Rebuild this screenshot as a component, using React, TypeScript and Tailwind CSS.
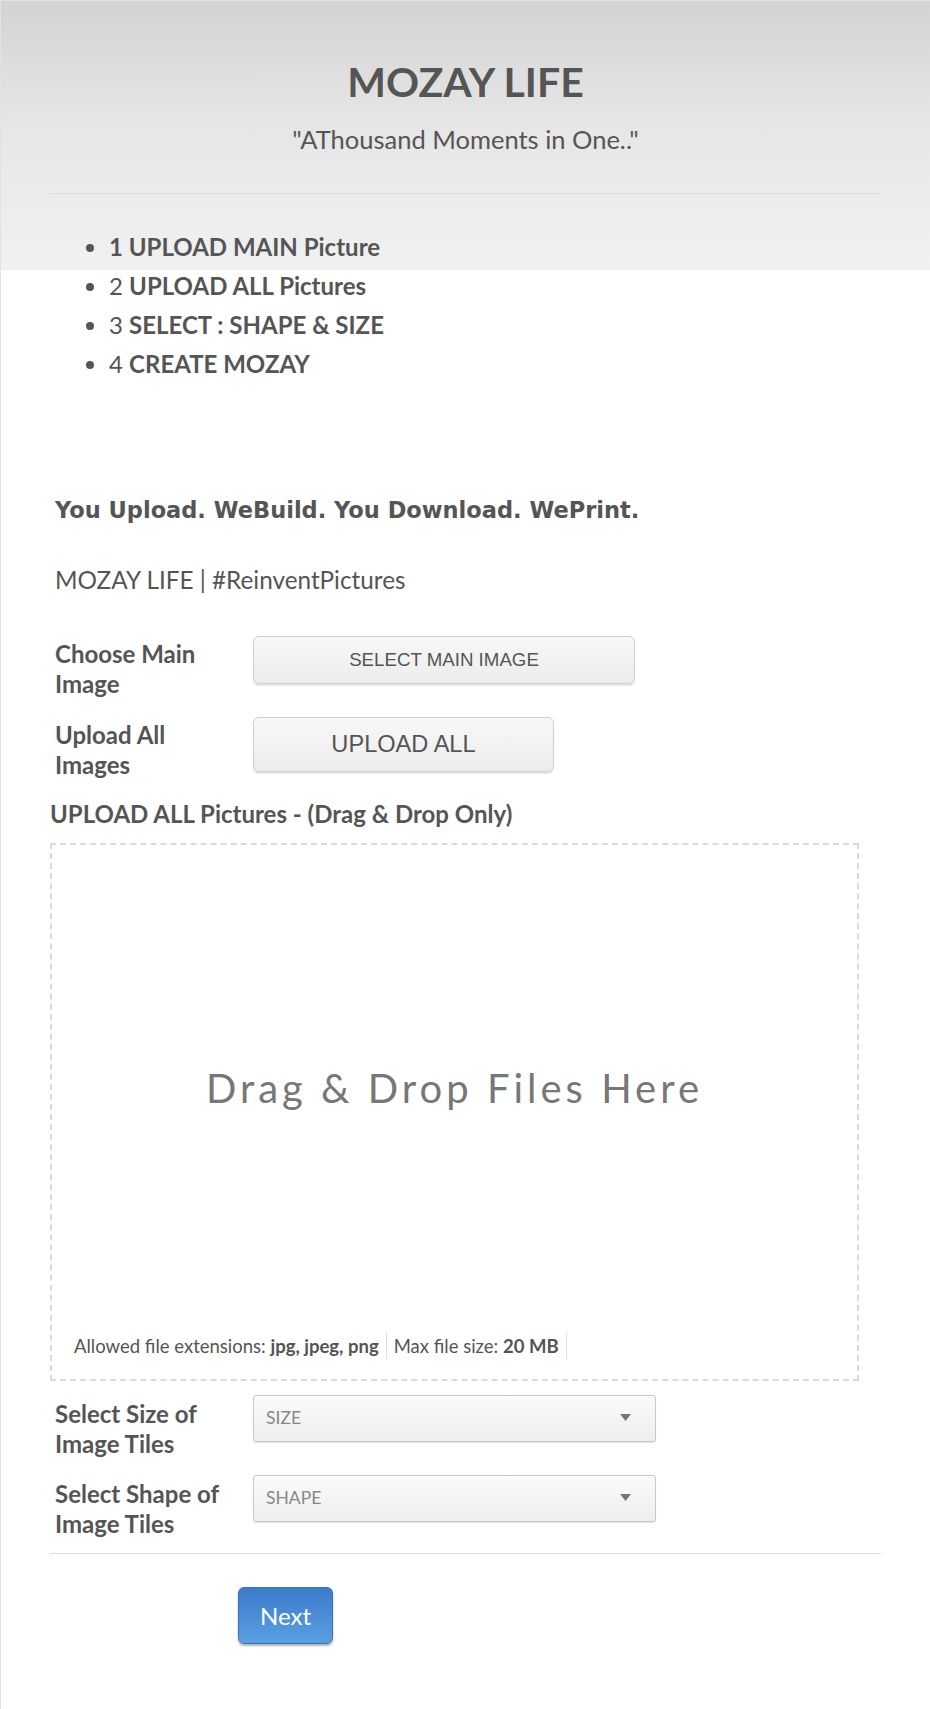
import React from 'react';

const lato = "font-['Lato','Noto_Sans',sans-serif]";

function FieldRow({ label, children, labelClass = '' }: { label: string; children: React.ReactNode; labelClass?: string }) {
  return (
    <div className="flex items-start">
      <div className={`w-[203px] shrink-0 pl-[5px] pr-4 text-[24px] font-bold leading-[30px] text-[#555] ${labelClass}`}>{label}</div>
      {children}
    </div>
  );
}

function SelectBox({ placeholder }: { placeholder: string }) {
  return (
    <div className="flex h-[47px] w-[403px] items-center justify-between rounded-[3px] border border-[#c8c8c8] bg-[linear-gradient(180deg,#fbfbfb,#eeeeee)] pl-3 pr-6 shadow-[0_1px_1px_rgba(0,0,0,0.12)]">
      <span className="text-[17.5px] text-[#888]">{placeholder}</span>
      <svg width="11" height="7" viewBox="0 0 11 7" className="mt-[-2px]">
        <path d="M0 0h11L5.5 7z" fill="#777" />
      </svg>
    </div>
  );
}

export default function App() {
  return (
    <div
      className={`${lato} min-h-[1709px] border-l border-t border-[#e2e2e2] bg-white bg-[linear-gradient(180deg,#d3d3d3_0%,#e6e6e6_45%,#f1f1f1_100%)] bg-[length:100%_269px] bg-no-repeat text-[#555]`}
    >
      {/* Header */}
      <div className="px-[49px] pt-[57px]">
        <h1 className="text-center text-[41px] font-bold leading-[48px] text-[#555]">MOZAY LIFE</h1>
        <p className="mt-[18px] text-center text-[25.5px] leading-[30px] text-[#555]">"AThousand Moments in One.."</p>
        <hr className="mt-[39px] border-0 border-t border-[#dcdcdc]" />

        <ul className="mt-[33px] list-disc pl-[59px] text-[24px] leading-[39px] marker:text-[#555]">
          <li className="font-bold">1 UPLOAD MAIN Picture</li>
          <li>2 <span className="font-bold">UPLOAD ALL Pictures</span></li>
          <li>3 <span className="font-bold">SELECT : SHAPE &amp; SIZE</span></li>
          <li>4 <span className="font-bold">CREATE MOZAY</span></li>
        </ul>
      </div>

      {/* Main form */}
      <div className="px-[49px]">
        <h2 className="mt-[112px] pl-[5px] font-['DejaVu_Sans',sans-serif] text-[22.5px] font-bold leading-[30px] text-[#555]">
          You Upload. WeBuild. You Download. WePrint.
        </h2>
        <p className="mt-[40px] pl-[5px] text-[24.3px] leading-[30px] text-[#555]">MOZAY LIFE | #ReinventPictures</p>

        <div className="mt-[41px] flex flex-col gap-[18px]">
          <FieldRow label="Choose Main Image" labelClass="pt-[3px]">
            <button className="h-[48px] w-[382px] rounded-[6px] border border-[#d0d0d0] bg-[linear-gradient(180deg,#f8f8f8,#ececec)] font-['Liberation_Sans',Arial,sans-serif] text-[18.7px] text-[#555] shadow-[0_2px_1px_rgba(0,0,0,0.1)]">
              SELECT MAIN IMAGE
            </button>
          </FieldRow>
          <FieldRow label="Upload All Images" labelClass="pt-[3px]">
            <button className="h-[55px] w-[301px] rounded-[6px] border border-[#d0d0d0] bg-[linear-gradient(180deg,#f8f8f8,#ececec)] font-['Liberation_Sans',Arial,sans-serif] text-[23.6px] text-[#555] shadow-[0_2px_1px_rgba(0,0,0,0.1)]">
              UPLOAD ALL
            </button>
          </FieldRow>
        </div>

        <p className="mt-[19px] text-[24px] font-bold leading-[30px] text-[#555]">UPLOAD ALL Pictures - (Drag &amp; Drop Only)</p>

        {/* Drop zone */}
        <div className="mr-[22px] mt-[14px] flex h-[538px] flex-col border-2 border-dashed border-[#dadada]">
          <div className="flex flex-1 items-center justify-center">
            <span className="text-[40px] tracking-[4px] text-[#777]">Drag &amp; Drop Files Here</span>
          </div>
          <div className="flex h-[48px] items-start pl-[22px] pt-[2px] text-[18.5px] leading-[26px] text-[#555]">
            <span className="border-r border-[#dcdcdc] pr-[7px]">
              Allowed file extensions: <b>jpg, jpeg, png</b>
            </span>
            <span className="border-r border-[#dcdcdc] px-[7px]">
              Max file size: <b>20 MB</b>
            </span>
          </div>
        </div>

        <div className="mt-[14px] flex flex-col gap-[16px]">
          <FieldRow label="Select Size of Image Tiles" labelClass="pt-[4px]">
            <SelectBox placeholder="SIZE" />
          </FieldRow>
          <FieldRow label="Select Shape of Image Tiles" labelClass="pt-[4px]">
            <SelectBox placeholder="SHAPE" />
          </FieldRow>
        </div>

        <hr className="mt-[14px] border-0 border-t border-[#e0e0e0]" />

        <div className="mt-[33px] pl-[188px]">
          <button className="h-[57px] w-[95px] rounded-[6px] border border-[#3a73bd] bg-[linear-gradient(180deg,#3b7bcb,#5aa0e0)] text-[24px] text-white shadow-[0_2px_2px_rgba(0,0,0,0.3)]">
            Next
          </button>
        </div>
      </div>
    </div>
  );
}
